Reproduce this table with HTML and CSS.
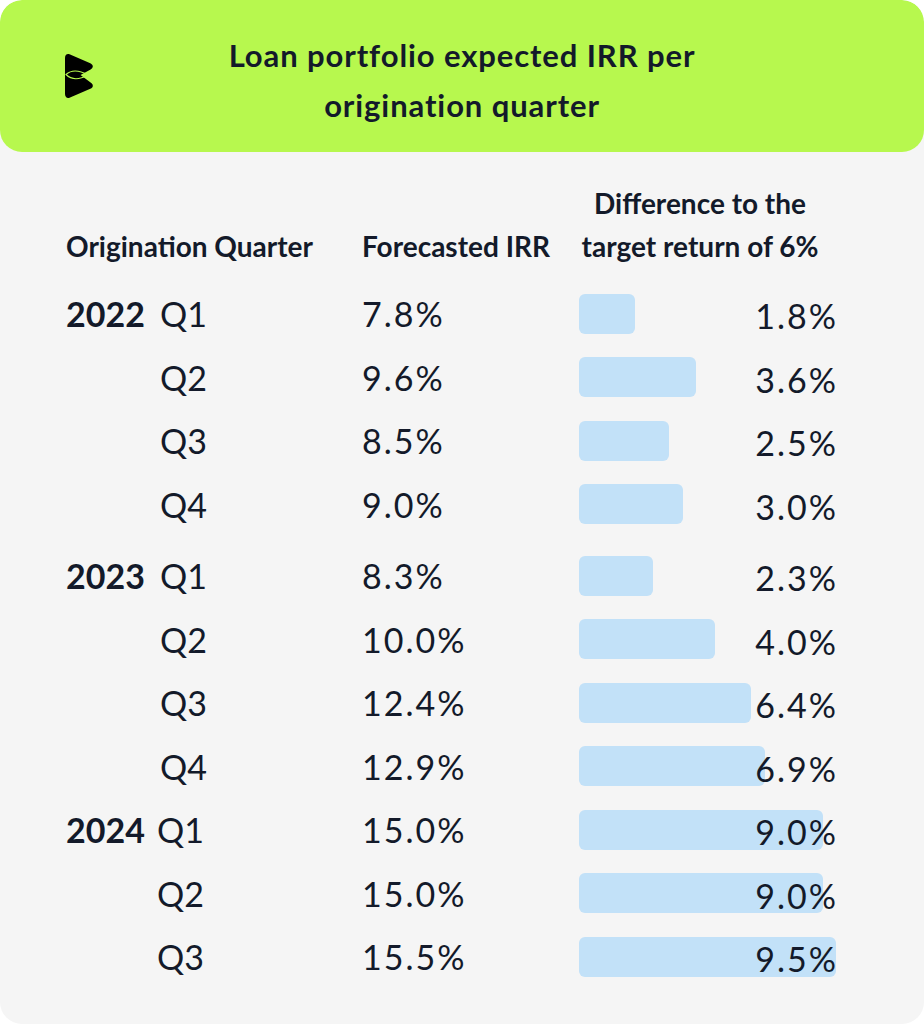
FILE: index.html
```html
<!DOCTYPE html>
<html lang="en">
<head>
<meta charset="utf-8">
<title>Loan portfolio expected IRR per origination quarter</title>
<link rel="stylesheet" href="styles.css">
</head>
<body>
<div class="card">
  <header class="banner">
    <div class="logo-cell">
      <svg class="logo" viewBox="0 0 28 44" width="28" height="44" aria-hidden="true">
        <path d="M4.5 0.3 C1.8 -0.6 0 1.2 0 4 V40 C0 42.8 1.8 44.6 4.5 43.7 L25.3 34.8 C28.6 33.3 28.6 30.2 25.6 28.4 L15.5 21 L25.6 15.6 C28.6 13.8 28.6 10.7 25.3 9.2 Z" fill="#000"/>
        <path d="M1 20.5 C6 16 14 16 23 21 C14 26 6 25.5 1 20.5 Z" fill="none" stroke="#b7f84e" stroke-width="1.1"/>
      </svg>
    </div>
    <h1 class="title">Loan portfolio expected IRR per<br>origination quarter</h1>
    <div></div>
  </header>

  <section class="table">
    <div class="row head">
      <div class="h-origin">Origination Quarter</div>
      <div class="h-irr">Forecasted IRR</div>
      <div class="h-diff">Difference to the<br>target return of 6%</div>
    </div>

    <div class="row">
      <div class="year">2022</div><div class="q">Q1</div><div class="irr">7.8%</div>
      <div class="diff"><div class="bar" style="width:56px"></div><div class="val">1.8%</div></div>
    </div>
    <div class="row">
      <div class="year"></div><div class="q">Q2</div><div class="irr">9.6%</div>
      <div class="diff"><div class="bar" style="width:117px"></div><div class="val">3.6%</div></div>
    </div>
    <div class="row">
      <div class="year"></div><div class="q">Q3</div><div class="irr">8.5%</div>
      <div class="diff"><div class="bar" style="width:90px"></div><div class="val">2.5%</div></div>
    </div>
    <div class="row">
      <div class="year"></div><div class="q">Q4</div><div class="irr">9.0%</div>
      <div class="diff"><div class="bar" style="width:104px"></div><div class="val">3.0%</div></div>
    </div>

    <div class="row group-start">
      <div class="year">2023</div><div class="q">Q1</div><div class="irr">8.3%</div>
      <div class="diff"><div class="bar" style="width:74px"></div><div class="val">2.3%</div></div>
    </div>
    <div class="row">
      <div class="year"></div><div class="q">Q2</div><div class="irr">10.0%</div>
      <div class="diff"><div class="bar" style="width:136px"></div><div class="val">4.0%</div></div>
    </div>
    <div class="row">
      <div class="year"></div><div class="q">Q3</div><div class="irr">12.4%</div>
      <div class="diff"><div class="bar" style="width:172px"></div><div class="val">6.4%</div></div>
    </div>
    <div class="row">
      <div class="year"></div><div class="q">Q4</div><div class="irr">12.9%</div>
      <div class="diff"><div class="bar" style="width:186px"></div><div class="val">6.9%</div></div>
    </div>

    <div class="row late">
      <div class="year">2024</div><div class="q">Q1</div><div class="irr">15.0%</div>
      <div class="diff"><div class="bar" style="width:244px"></div><div class="val">9.0%</div></div>
    </div>
    <div class="row late">
      <div class="year"></div><div class="q">Q2</div><div class="irr">15.0%</div>
      <div class="diff"><div class="bar" style="width:244px"></div><div class="val">9.0%</div></div>
    </div>
    <div class="row late">
      <div class="year"></div><div class="q">Q3</div><div class="irr">15.5%</div>
      <div class="diff"><div class="bar" style="width:257px"></div><div class="val">9.5%</div></div>
    </div>
  </section>
</div>
</body>
</html>
```

FILE: styles.css
```css
html, body {
  margin: 0;
  padding: 0;
  background: #ffffff;
}

body {
  font-family: Lato, "Open Sans", "DejaVu Sans", sans-serif;
  color: #131a2a;
}

.card {
  width: 924px;
  height: 1024px;
  background: #f5f5f5;
  border-radius: 22px;
  overflow: hidden;
}

.banner {
  height: 152px;
  background: #b7f84e;
  border-radius: 22px;
  display: grid;
  grid-template-columns: 1fr auto 1fr;
  align-items: center;
}

.logo-cell {
  padding-left: 65px;
  display: flex;
  align-items: center;
  padding-bottom: 1px;
}

.logo {
  display: block;
}

.title {
  margin: 8px 0 0;
  font-size: 31px;
  font-weight: 700;
  line-height: 50px;
  text-align: center;
  letter-spacing: 0.9px;
}

.table {
  padding: 30px 0 0 66px;
}

.row {
  display: grid;
  grid-template-columns: 94px 202px 217px 257px;
  align-items: center;
  height: 63.5px;
  font-size: 34px;
}

.row.head {
  height: auto;
  align-items: end;
  font-size: 28px;
  font-weight: 700;
  line-height: 43px;
  margin-bottom: 14px;
}

.h-origin {
  grid-column: 1 / span 2;
}

.h-irr {
  grid-column: 3;
  white-space: nowrap;
}

.h-diff {
  grid-column: 4;
  width: 242px;
  text-align: center;
  white-space: nowrap;
}

.group-start {
  margin-top: 8px;
}

.year {
  font-weight: 700;
}

.late .q {
  margin-left: -3px;
}

.irr,
.val {
  letter-spacing: 2px;
}

.diff {
  display: grid;
  align-items: center;
}

.bar,
.val {
  grid-area: 1 / 1;
}

.bar {
  height: 40px;
  background: #c2e1f8;
  border-radius: 6px;
  justify-self: start;
}

.val {
  justify-self: end;
  margin-right: -2px;
  padding-top: 4px;
}
```
